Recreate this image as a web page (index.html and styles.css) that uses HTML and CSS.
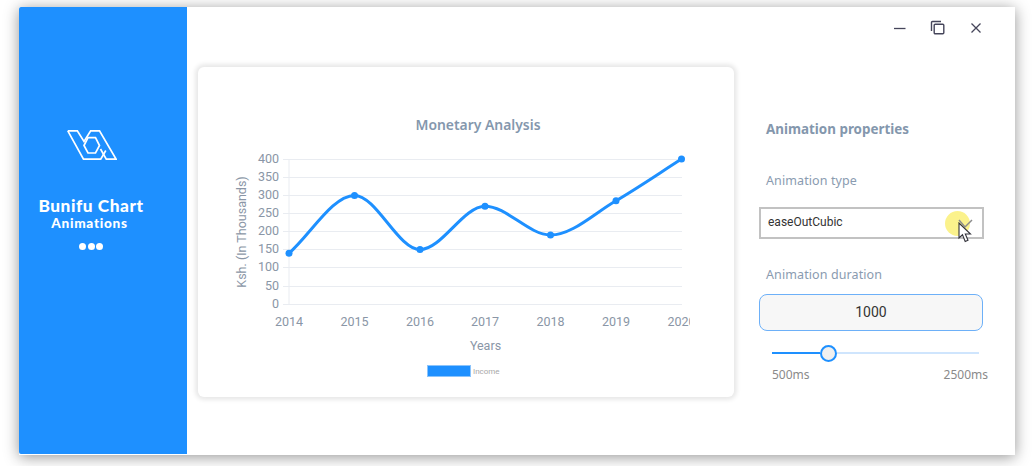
FILE: index.html
```html
<!DOCTYPE html>
<html lang="en">
<head>
<meta charset="utf-8">
<title>Bunifu Chart Animations</title>
<link rel="stylesheet" href="styles.css">
</head>
<body>
<div class="window">
  <aside class="sidebar">
    <svg class="logo" width="50" height="30" viewBox="0 0 50 30" fill="none" stroke="#fff" stroke-width="1.7">
      <path d="M.8 .8H10.300L17 11.500L23.700 .8H32.500L49.200 29.200H39.300L33.500 19"/>
      <path d="M.8 .8L16.500 29.200H33.700L38.800 20.500"/>
      <path d="M17 15.500L21 7.700H28.500L32.500 15.500L28.500 23H21Z"/>
    </svg>
    <div class="brand">Bunifu Chart</div>
    <div class="brand-sub">Animations</div>
    <div class="dots"><span></span><span></span><span></span></div>
  </aside>
  <main class="main">
    <div class="titlebar">
      <svg class="win-icon" width="14" height="14" viewBox="0 0 14 14" fill="none" stroke="#45455a" stroke-width="1.3"><path d="M1 7.500H12.500"/></svg>
      <svg class="win-icon" width="16" height="16" viewBox="0 0 16 16" fill="none" stroke="#45455a" stroke-width="1.4"><path d="M1.500 11V2.500A1 1 0 0 1 2.500 1.500H11"/><rect x="4.200" y="4.200" width="9.600" height="9.600" rx="1"/></svg>
      <svg class="win-icon" width="14" height="14" viewBox="0 0 14 14" fill="none" stroke="#45455a" stroke-width="1.3"><path d="M2.500 2.500L11.500 11.500M11.500 2.500L2.500 11.500"/></svg>
    </div>
    <div class="content">
      <section class="card">
        <svg class="chart" width="536" height="330" viewBox="198 67 536 330">
          <defs><clipPath id="plot"><rect x="198" y="67" width="492" height="330"/></clipPath></defs>
          <text class="chart-title" x="478" y="130" text-anchor="middle">Monetary Analysis</text>
          <g class="grid">
            <path d="M289 159V304"/>
            <path d="M283 159.500H682M283 177.500H682M283 195.500H682M283 213.500H682M283 231.500H682M283 249.500H682M283 267.500H682M283 286.500H682M283 304.500H682"/>
          </g>
          <g class="tick" text-anchor="end">
            <text x="279" y="163">400</text>
            <text x="279" y="181">350</text>
            <text x="279" y="199">300</text>
            <text x="279" y="217">250</text>
            <text x="279" y="235">200</text>
            <text x="279" y="253">150</text>
            <text x="279" y="271">100</text>
            <text x="279" y="290">50</text>
            <text x="279" y="308">0</text>
          </g>
          <g class="tick" text-anchor="middle" clip-path="url(#plot)">
            <text x="289" y="326">2014</text>
            <text x="354.500" y="326">2015</text>
            <text x="420" y="326">2016</text>
            <text x="485" y="326">2017</text>
            <text x="550.500" y="326">2018</text>
            <text x="616" y="326">2019</text>
            <text x="681.500" y="326">2020</text>
          </g>
          <text class="tick" transform="translate(246 232) rotate(-90)" text-anchor="middle">Ksh. (In Thousands)</text>
          <text class="tick" x="485.500" y="350" text-anchor="middle">Years</text>
          <path class="line" d="M289 253.300C310.800 234 332.700 195.400 354.500 195.400C376.300 195.400 398.200 249.600 420 249.600C441.800 249.600 463.300 206.200 485 206.200C506.800 206.200 528.700 235 550.500 235C572.300 235 594.200 213.300 616 200.700C637.800 188 659.700 172.900 681.500 159"/>
          <g class="pts">
            <circle cx="289" cy="253.300" r="3.500"/>
            <circle cx="354.500" cy="195.400" r="3.500"/>
            <circle cx="420" cy="249.600" r="3.500"/>
            <circle cx="485" cy="206.200" r="3.500"/>
            <circle cx="550.500" cy="235" r="3.500"/>
            <circle cx="616" cy="200.700" r="3.500"/>
            <circle cx="681.500" cy="159" r="3.500"/>
          </g>
          <rect class="swatch" x="427.500" y="365.500" width="43" height="11"/>
          <text class="legend" x="473" y="374">Income</text>
        </svg>
      </section>
      <section class="panel">
        <h2 class="panel-title">Animation properties</h2>
        <div class="field-label first">Animation type</div>
        <div class="select">
          <span>easeOutCubic</span>
          <svg class="chevron" width="16" height="10" viewBox="0 0 16 10" fill="none" stroke="#8c8c8c" stroke-width="1.500"><path d="M1 1L7 8L14 1"/></svg>
          <span class="highlight"></span>
          <svg class="cursor" width="14" height="21" viewBox="0 0 14 21"><path d="M1 1V16L4.500 12.800L7.200 19.500L10 18.300L7.300 12H12.500Z" fill="#fff" stroke="#33333b" stroke-width="1.100"/></svg>
        </div>
        <div class="field-label second">Animation duration</div>
        <div class="input">1000</div>
        <div class="slider">
          <div class="track-on"></div>
          <div class="thumb"></div>
          <div class="track-off"></div>
        </div>
        <div class="range"><span>500ms</span><span>2500ms</span></div>
      </section>
    </div>
  </main>
</div>
</body>
</html>
```

FILE: styles.css
```css
* { box-sizing: border-box; }
html, body { margin: 0; height: 100%; overflow: hidden; background: #fff; }
body { padding: 7px 21px 11px 19px; font-family: "Open Sans", sans-serif; }
.window {
  display: flex;
  width: 996px;
  height: 448px;
  background: #fff;
  box-shadow: 0 2px 14px rgba(0, 0, 0, .42);
}
.sidebar {
  width: 168px;
  height: 447px;
  background: #1e90ff;
  border-radius: 2px 0 0 2px;
  display: flex;
  flex-direction: column;
  align-items: center;
  color: #fff;
  padding: 122px 24px 0 0;
}
.logo { display: block; margin-left: 2px; margin-top: 1px; }
.brand {
  margin-top: 37px;
  font: 900 17.300px/18px "Lato", sans-serif;
  letter-spacing: .55px;
  white-space: nowrap;
}
.brand-sub {
  font: 900 13.600px/14px "Lato", sans-serif;
  letter-spacing: .7px;
  margin-top: 1px;
  margin-left: -3px;
  white-space: nowrap;
}
.dots { display: flex; gap: 1.500px; margin-top: 13px; }
.dots span { width: 7px; height: 7px; border-radius: 50%; background: #fff; }
.main { flex: 1; display: flex; flex-direction: column; min-width: 0; }
.titlebar {
  display: flex;
  justify-content: flex-end;
  align-items: center;
  gap: 23px;
  height: 42px;
  padding: 0 32px 0 0;
}
.win-icon { display: block; }
.content { display: flex; padding: 18px 0 0 11px; }
.card {
  width: 536px;
  height: 330px;
  flex: none;
  background: #fff;
  border-radius: 6px;
  box-shadow: 0 0 4px 3px rgba(0, 0, 0, .09);
}
.chart { display: block; }
.chart-title { font: 600 13.900px "Noto Sans", sans-serif; fill: #8497ad; }
.grid path { stroke: #e9ecf1; stroke-width: 1; fill: none; }
.tick { font: 12.500px "Roboto", sans-serif; fill: #8a96a6; }
.line { fill: none; stroke: #1e90ff; stroke-width: 3; }
.pts circle { fill: #1e90ff; }
.swatch { fill: #1e90ff; stroke: #8cc4fb; stroke-width: 1; }
.legend { font: 8px "Roboto", sans-serif; fill: #a8a8a8; }
.panel { width: 249px; margin-left: 25px; display: flex; flex-direction: column; }
.panel-title {
  margin: 53px 0 0 7px;
  font: 700 13.400px/18px "Noto Sans", sans-serif;
  color: #8497ad;
  white-space: nowrap;
}
.field-label {
  margin-left: 7px;
  font: 400 12.500px/18px "Noto Sans", sans-serif;
  color: #8a9bb0;
  letter-spacing: .1px;
}
.field-label.first { margin-top: 34px; }
.field-label.second { margin-top: 27px; }
.select {
  position: relative;
  margin-top: 17px;
  width: 225px;
  height: 32px;
  border: 2px solid #c2c2c2;
  display: flex;
  align-items: center;
  padding: 0 0 2px 7px;
  font: 12px "Roboto", sans-serif;
  color: #333;
}
.chevron { position: absolute; left: 197px; top: 10px; z-index: 2; }
.highlight {
  position: absolute;
  left: 184px;
  top: 2px;
  width: 25px;
  height: 25px;
  border-radius: 50%;
  background: rgba(250, 240, 120, .85);
}
.cursor { position: absolute; left: 197px; top: 13px; z-index: 3; }
.input {
  margin-top: 10px;
  width: 224px;
  height: 37px;
  background: #f7f7f7;
  border: 1px solid #6db0f8;
  border-radius: 8px;
  display: flex;
  align-items: center;
  justify-content: center;
  padding-bottom: 2px;
  font: 14px "Roboto", sans-serif;
  color: #333;
}
.slider { display: flex; align-items: center; margin: 13px 0 0 13px; width: 207px; height: 18px; }
.track-on { width: 48px; height: 2px; background: #1e90ff; }
.thumb {
  width: 17px;
  height: 17px;
  flex: none;
  border-radius: 50%;
  background: #f0f0f0;
  border: 2px solid #1e90ff;
}
.track-off { flex: 1; height: 2px; background: #cfe5fd; }
.range {
  display: flex;
  justify-content: space-between;
  margin: 5px 0 0 13px;
  width: 216px;
  font: 12px/16px "Noto Sans", sans-serif;
  color: #8a8a8a;
}
```
